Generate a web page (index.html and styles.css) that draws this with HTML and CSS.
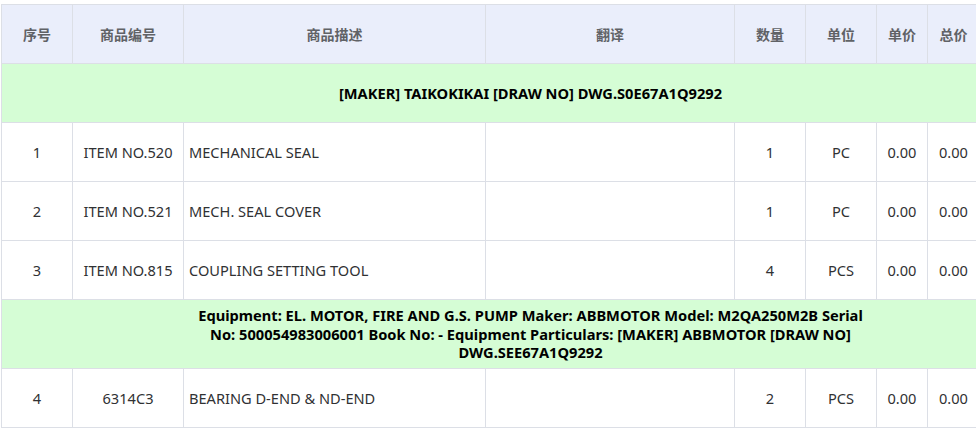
FILE: index.html
```html
<!DOCTYPE html>
<html lang="zh-CN">
<head>
<meta charset="utf-8">
<title>商品列表</title>
<link rel="stylesheet" href="styles.css">
</head>
<body>
<div class="wrap">
<table class="goods">
  <colgroup>
    <col class="c-no"><col class="c-code"><col class="c-desc"><col class="c-trans">
    <col class="c-qty"><col class="c-unit"><col class="c-price"><col class="c-total"><col class="c-extra">
  </colgroup>
  <thead>
    <tr>
      <th>序号</th><th>商品编号</th><th>商品描述</th><th>翻译</th>
      <th>数量</th><th>单位</th><th>单价</th><th>总价</th><th></th>
    </tr>
  </thead>
  <tbody>
    <tr class="group">
      <td colspan="9"><div class="group-text">[MAKER] TAIKOKIKAI [DRAW NO] DWG.S0E67A1Q9292</div></td>
    </tr>
    <tr>
      <td class="center">1</td><td class="center">ITEM NO.520</td><td>MECHANICAL SEAL</td><td></td>
      <td class="center">1</td><td class="center">PC</td><td class="center">0.00</td><td class="center">0.00</td><td></td>
    </tr>
    <tr>
      <td class="center">2</td><td class="center">ITEM NO.521</td><td>MECH. SEAL COVER</td><td></td>
      <td class="center">1</td><td class="center">PC</td><td class="center">0.00</td><td class="center">0.00</td><td></td>
    </tr>
    <tr>
      <td class="center">3</td><td class="center">ITEM NO.815</td><td>COUPLING SETTING TOOL</td><td></td>
      <td class="center">4</td><td class="center">PCS</td><td class="center">0.00</td><td class="center">0.00</td><td></td>
    </tr>
    <tr class="group group-multi">
      <td colspan="9"><div class="group-text">Equipment: EL. MOTOR, FIRE AND G.S. PUMP Maker: ABBMOTOR Model: M2QA250M2B Serial No: 500054983006001 Book No: - Equipment Particulars: [MAKER] ABBMOTOR [DRAW NO] DWG.SEE67A1Q9292</div></td>
    </tr>
    <tr>
      <td class="center">4</td><td class="center">6314C3</td><td>BEARING D-END &amp; ND-END</td><td></td>
      <td class="center">2</td><td class="center">PCS</td><td class="center">0.00</td><td class="center">0.00</td><td></td>
    </tr>
  </tbody>
</table>
</div>
</body>
</html>
```
FILE: styles.css
```css
html, body {
  margin: 0;
  padding: 0;
  background: #ffffff;
  overflow: hidden;
}
body {
  font-family: "Noto Sans", "Noto Sans CJK SC", sans-serif;
  font-size: 14.6px;
  color: #303133;
}
.wrap {
  padding: 4px 0 0 1px;
  width: 1100px;
}
.goods {
  border-collapse: collapse;
  table-layout: fixed;
  width: 1059px;
}
.c-no { width: 71px; }
.c-code { width: 111px; }
.c-desc { width: 302px; }
.c-trans { width: 249px; }
.c-qty { width: 71px; }
.c-unit { width: 71px; }
.c-price { width: 51px; }
.c-total { width: 52px; }
.c-extra { width: 80px; }
.goods th, .goods td {
  border: 1px solid #dcdfe6;
  height: 59px;
  padding: 0 5px;
  box-sizing: border-box;
}
.goods th {
  background: #eaeefb;
  color: #606266;
  font-size: 14px;
  font-weight: bold;
  text-align: center;
}
.goods td {
  text-align: left;
}
.goods td.center {
  text-align: center;
}
.group td {
  background: #d5fdd5;
  text-align: center;
  color: #000;
  font-size: 14.65px;
  font-weight: bold;
}
.group-multi td {
  height: 69px;
}
.group-text {
  max-width: 676px;
  margin: 0 auto;
  line-height: 18.5px;
  text-align: center;
}
```
